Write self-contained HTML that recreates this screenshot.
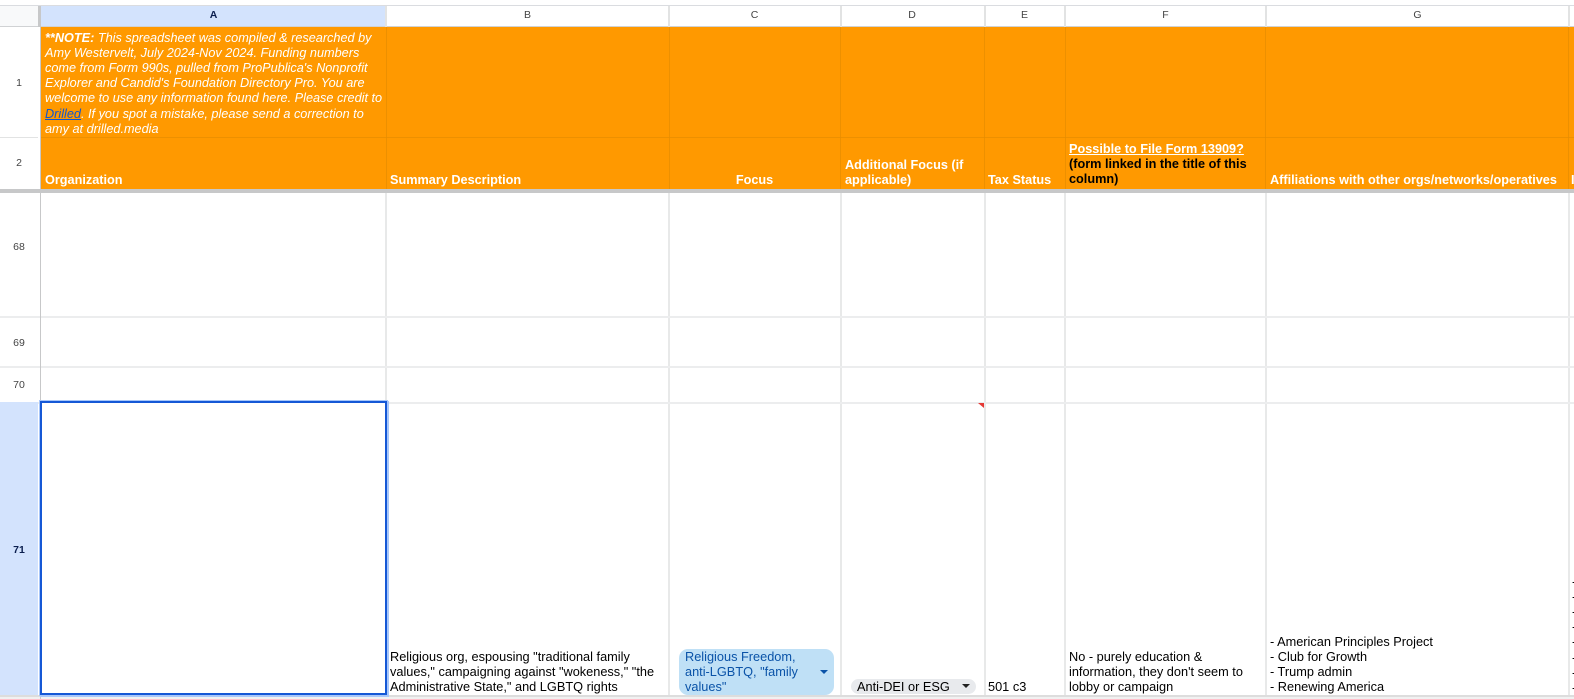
<!DOCTYPE html>
<html><head><meta charset="utf-8"><style>
html,body{margin:0;padding:0;width:1574px;height:699px;overflow:hidden;background:#fff}
body{position:relative;font-family:"Liberation Sans",sans-serif;color:#000}
div{position:absolute;box-sizing:border-box}
.t{font-size:12.75px;line-height:15.2px;white-space:nowrap}
.b{font-weight:bold;color:#fff;font-size:12.7px;line-height:15.2px;white-space:nowrap}
.h{top:5px;height:21px;font-size:10.5px;line-height:21px;text-align:center;color:#444}
.r{left:0;width:38px;height:15px;line-height:15px;text-align:center;font-size:10.5px;color:#444}
.v{width:2px;top:192px;height:503px;background:#e8e9e9}
.hd{width:2px;top:6px;height:21px;background:#e2e3e3}
.hl{left:0;width:1574px;height:2px;background:#ecedee}
.ov{background:#e58b00;opacity:.7;top:27px;width:1px;height:162px}
</style></head><body>
<div style="left:0;top:5px;width:1574px;height:1px;background:#dadce0"></div>
<div style="left:41px;top:6px;width:345px;height:21px;background:#d3e3fd"></div>
<div style="left:0;top:6px;width:38px;height:21px;background:#f8f9fa"></div>
<div class="h" style="left:41px;width:345px;color:#0b1f4f;font-weight:bold">A</div>
<div class="h" style="left:386px;width:283px">B</div>
<div class="h" style="left:669px;width:171px">C</div>
<div class="h" style="left:840px;width:144px">D</div>
<div class="h" style="left:984px;width:81px">E</div>
<div class="h" style="left:1065px;width:201px">F</div>
<div class="h" style="left:1266px;width:303px">G</div>
<div style="left:0;top:26px;width:1574px;height:1px;background:#d0d2d4"></div>
<div style="left:41px;top:27px;width:1533px;height:162px;background:#ff9900"></div>
<div style="left:41px;top:137px;width:1533px;height:1px;background:#e58b00;opacity:.7"></div>
<div class="ov" style="left:386px"></div>
<div class="ov" style="left:669px"></div>
<div class="ov" style="left:840px"></div>
<div class="ov" style="left:984px"></div>
<div class="ov" style="left:1065px"></div>
<div class="ov" style="left:1265px"></div>
<div class="ov" style="left:1568px"></div>
<div style="left:38px;top:6px;width:3px;height:21px;background:#c7c8c9"></div>
<div class="hd" style="left:385px"></div>
<div class="hd" style="left:668px"></div>
<div class="hd" style="left:840px"></div>
<div class="hd" style="left:984px"></div>
<div class="hd" style="left:1064px"></div>
<div class="hd" style="left:1265px"></div>
<div class="hd" style="left:1568px"></div>
<div class="v" style="left:385px"></div>
<div class="v" style="left:668px"></div>
<div class="v" style="left:840px"></div>
<div class="v" style="left:984px"></div>
<div class="v" style="left:1064px"></div>
<div class="v" style="left:1265px"></div>
<div class="v" style="left:1568px"></div>
<div class="hl" style="top:316px"></div>
<div class="hl" style="top:366px"></div>
<div class="hl" style="top:401.5px"></div>
<div style="left:0;top:137px;width:38px;height:1px;background:#e2e3e3"></div>
<div style="left:0;top:695px;width:1574px;height:2px;background:#dddddd"></div>
<div style="left:0;top:697px;width:1574px;height:2px;background:#f1f1f1"></div>
<div style="left:0;top:188.5px;width:1574px;height:4px;background:#c7c8c9"></div>
<div style="left:0;top:402px;width:38px;height:293px;background:#d3e3fd"></div>
<div style="left:40px;top:27px;width:1px;height:672px;background:#c7c8c9"></div>
<div class="r" style="top:76px">1</div>
<div class="r" style="top:156px">2</div>
<div class="r" style="top:240px">68</div>
<div class="r" style="top:336px">69</div>
<div class="r" style="top:378px">70</div>
<div class="r" style="top:543px;color:#0b1f4f;font-weight:bold">71</div>
<div class="b" style="left:45px;top:30.5px;font-weight:normal;font-style:italic;font-size:12.7px"><b>**NOTE:</b> This spreadsheet was compiled &amp; researched by<br>Amy Westervelt, July 2024-Nov 2024. Funding numbers<br>come from Form 990s, pulled from ProPublica's Nonprofit<br>Explorer and Candid's Foundation Directory Pro. You are<br>welcome to use any information found here. Please credit to<br><span style="color:#1155cc;text-decoration:underline">Drilled</span>. If you spot a mistake, please send a correction to<br>amy at drilled.media</div>
<div class="b" style="left:45px;top:173px">Organization</div>
<div class="b" style="left:390px;top:173px">Summary Description</div>
<div class="b" style="left:669px;width:171px;top:173px;text-align:center">Focus</div>
<div class="b" style="left:845px;top:158px">Additional Focus (if<br>applicable)</div>
<div class="b" style="left:988px;top:173px">Tax Status</div>
<div class="b" style="left:1069px;top:142px;color:#000"><span style="color:#fff;text-decoration:underline">Possible to File Form 13909?</span><br>(form linked in the title of this<br>column)</div>
<div class="b" style="left:1270px;top:173px">Affiliations with other orgs/networks/operatives</div>
<div style="left:40px;top:401px;width:347px;height:294px;border:2px solid #1558d6;box-shadow:0 0 0 1px #a8c7fa,1px 1px 0 1px #a8c7fa;background:#fff"></div>
<div class="t" style="left:390px;top:649px">Religious org, espousing "traditional family<br>values," campaigning against "wokeness," "the<br>Administrative State," and LGBTQ rights</div>
<div style="left:679px;top:648.5px;width:155px;height:46px;border-radius:9px;background:#bfe0f6"></div>
<div class="t" style="left:685px;top:649px;color:#0a53a8">Religious Freedom,<br>anti-LGBTQ, "family<br>values"</div>
<div style="left:820px;top:670px;width:0;height:0;border-left:4px solid transparent;border-right:4px solid transparent;border-top:4px solid #0a53a8"></div>
<div style="left:851px;top:679px;width:125px;height:15px;border-radius:8px;background:#e8eaed"></div>
<div class="t" style="left:857px;top:679px">Anti-DEI or ESG</div>
<div style="left:962px;top:684px;width:0;height:0;border-left:4.5px solid transparent;border-right:4.5px solid transparent;border-top:4.5px solid #222"></div>
<div class="t" style="left:988px;top:679px">501 c3</div>
<div class="t" style="left:1069px;top:649px">No - purely education &amp;<br>information, they don't seem to<br>lobby or campaign</div>
<div class="t" style="left:1270px;top:633.5px">- American Principles Project<br>- Club for Growth<br>- Trump admin<br>- Renewing America</div>
<div class="t" style="left:1572px;top:573.5px">-<br>-<br>-<br>-<br>-<br>-<br>-<br>-</div>
<div style="left:978px;top:403px;width:0;height:0;border-left:6px solid transparent;border-top:5px solid #e53935"></div>
<div class="b" style="left:1571px;top:173px">I</div>
</body></html>
